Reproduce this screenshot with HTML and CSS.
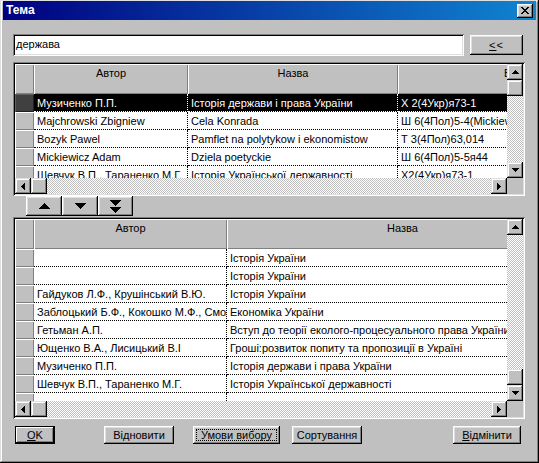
FILE: index.html
```html
<!DOCTYPE html>
<html>
<head>
<meta charset="utf-8">
<title>Тема</title>
<link rel="stylesheet" href="styles.css">
</head>
<body>
<div class="window">
  <div class="titlebar">
    <span class="title">Тема</span>
    <div class="close"><svg width="8" height="7" viewBox="0 0 8 7"><path d="M0 0h2v1H0zM6 0h2v1H6zM1 1h2v1H1zM5 1h2v1H5zM2 2h4v1H2zM3 3h2v1H3zM2 4h4v1H2zM1 5h2v1H1zM5 5h2v1H5zM0 6h2v1H0zM6 6h2v1H6z"/></svg></div>
  </div>
  <div class="content">
    <div class="search">
      <div class="field">держава</div>
      <div class="btn back"><span class="u">&lt;</span>&lt;</div>
    </div>

    <div class="grid grid-top">
      <div class="data">
        <div class="hrow">
          <div class="h ind"></div>
          <div class="h a1">Автор</div>
          <div class="h t1">Назва</div>
          <div class="h k1"><span class="clip">Бібліотечний шифр</span></div>
        </div>
        <div class="row sel">
          <div class="i"></div><div class="c a1">Музиченко П.П.</div><div class="c t1">Історія держави і права України</div><div class="c k1">Х 2(4Укр)я73-1</div>
        </div>
        <div class="row">
          <div class="i"></div><div class="c a1">Majchrowski Zbigniew</div><div class="c t1">Cela Konrada</div><div class="c k1">Ш 6(4Пол)5-4(Mickiewicz)</div>
        </div>
        <div class="row">
          <div class="i"></div><div class="c a1">Bozyk Pawel</div><div class="c t1">Pamflet na polytykow i ekonomistow</div><div class="c k1">Т 3(4Пол)63,014</div>
        </div>
        <div class="row">
          <div class="i"></div><div class="c a1">Mickiewicz Adam</div><div class="c t1">Dziela poetyckie</div><div class="c k1">Ш 6(4Пол)5-5я44</div>
        </div>
        <div class="row">
          <div class="i"></div><div class="c a1">Шевчук В.П., Тараненко М.Г.</div><div class="c t1">Історія Української державності</div><div class="c k1">Х2(4Укр)я73-1</div>
        </div>
      </div>
      <div class="vscroll">
        <div class="sb"><svg width="7" height="4" viewBox="0 0 7 4"><path d="M3 0h1v1h1v1h1v1h1v1H0V3h1V2h1V1h1z"/></svg></div>
        <div class="sb"></div>
        <div class="track"></div>
        <div class="sb"><svg width="7" height="4" viewBox="0 0 7 4"><path d="M0 0h7v1H6v1H5v1H4v1H3V3H2V2H1V1H0z"/></svg></div>
      </div>
      <div class="hscroll">
        <div class="sb"><svg width="4" height="7" viewBox="0 0 4 7"><path d="M3 0h1v7H3V6H2V5H1V4H0V3h1V2h1V1h1z"/></svg></div>
        <div class="sb"></div>
        <div class="track"></div>
        <div class="sb"><svg width="4" height="7" viewBox="0 0 4 7"><path d="M0 0h1v1h1v1h1v1h1v1H3v1H2v1H1v1H0z"/></svg></div>
      </div>
      <div class="corner"></div>
    </div>

    <div class="nav">
      <div class="nbtn"><svg width="11" height="6" viewBox="0 0 11 6" shape-rendering="crispEdges"><polygon points="5.5,0 11,6 0,6"/></svg></div>
      <div class="nbtn"><svg width="11" height="6" viewBox="0 0 11 6" shape-rendering="crispEdges"><polygon points="0,0 11,0 5.5,6"/></svg></div>
      <div class="nbtn"><svg width="11" height="13" viewBox="0 0 11 13" shape-rendering="crispEdges"><polygon points="0,0 11,0 11,1 5.5,6 0,1"/><polygon points="0,7 11,7 5.5,13"/></svg></div>
    </div>

    <div class="grid grid-bottom">
      <div class="data">
        <div class="hrow">
          <div class="h ind"></div>
          <div class="h a2">Автор</div>
          <div class="h t2"><span class="t2h">Назва</span></div>
        </div>
        <div class="row"><div class="i"></div><div class="c a2"></div><div class="c t2">Історія України</div></div>
        <div class="row"><div class="i"></div><div class="c a2"></div><div class="c t2">Історія України</div></div>
        <div class="row"><div class="i"></div><div class="c a2">Гайдуков Л.Ф., Крушінський В.Ю.</div><div class="c t2">Історія України</div></div>
        <div class="row"><div class="i"></div><div class="c a2">Заблоцький Б.Ф., Кокошко М.Ф., Смолій В.А.</div><div class="c t2">Економіка України</div></div>
        <div class="row"><div class="i"></div><div class="c a2">Гетьман А.П.</div><div class="c t2">Вступ до теорії еколого-процесуального права України</div></div>
        <div class="row"><div class="i"></div><div class="c a2">Ющенко В.А., Лисицький В.І</div><div class="c t2">Гроші:розвиток попиту та пропозиції в Україні</div></div>
        <div class="row"><div class="i"></div><div class="c a2">Музиченко П.П.</div><div class="c t2">Історія держави і права України</div></div>
        <div class="row"><div class="i"></div><div class="c a2">Шевчук В.П., Тараненко М.Г.</div><div class="c t2">Історія Української державності</div></div>
        <div class="row"><div class="i"></div><div class="c a2"></div><div class="c t2"></div></div>
      </div>
      <div class="vscroll">
        <div class="sb"><svg width="7" height="4" viewBox="0 0 7 4"><path d="M3 0h1v1h1v1h1v1h1v1H0V3h1V2h1V1h1z"/></svg></div>
        <div class="track"></div>
        <div class="sb"></div>
        <div class="sb"><svg width="7" height="4" viewBox="0 0 7 4"><path d="M0 0h7v1H6v1H5v1H4v1H3V3H2V2H1V1H0z"/></svg></div>
      </div>
      <div class="hscroll">
        <div class="sb"><svg width="4" height="7" viewBox="0 0 4 7"><path d="M3 0h1v7H3V6H2V5H1V4H0V3h1V2h1V1h1z"/></svg></div>
        <div class="sb"></div>
        <div class="track"></div>
        <div class="sb"><svg width="4" height="7" viewBox="0 0 4 7"><path d="M0 0h1v1h1v1h1v1h1v1H3v1H2v1H1v1H0z"/></svg></div>
      </div>
      <div class="corner"></div>
    </div>

    <div class="buttons">
      <div class="btn default ok"><span class="u">O</span>K</div>
      <div class="btn restore">Відновити</div>
      <div class="btn focus cond"><span class="focusrect">Умови вибору</span></div>
      <div class="btn sort">Сортування</div>
      <div class="btn cancel"><span class="u">В</span>ідмінити</div>
    </div>
  </div>
</div>
</body>
</html>
```
FILE: styles.css
```css
* { box-sizing: border-box; }
html, body { margin: 0; padding: 0; background: #c0c0c0; }
body {
  font-family: "Liberation Sans", Arial, sans-serif;
  font-size: 11px;
  color: #000;
}
.window {
  width: 539px;
  height: 463px;
  background: #c0c0c0;
  padding: 1px 3px 3px 3px;
  box-shadow: inset -1px -1px #000, inset 1px 1px #dfdfdf, inset -2px -2px #808080, inset 2px 2px #fff;
}
.titlebar {
  height: 19px;
  display: flex;
  align-items: center;
  justify-content: space-between;
  padding: 0 3px 0 3px;
  background: linear-gradient(to right, #000080, #1084d0);
  color: #fff;
}
.title { font-weight: bold; font-size: 12px; line-height: 13px; }
.close {
  width: 16px; height: 14px;
  background: #c0c0c0;
  display: flex; align-items: center; justify-content: center;
  box-shadow: inset -1px -1px #000, inset 1px 1px #fff, inset -2px -2px #808080, inset 2px 2px #dfdfdf;
  padding-right: 1px;
}
.content { padding-left: 10px; }

.search { display: flex; margin-top: 14px; height: 22px; }
.field {
  width: 451px; height: 22px;
  background: #fff;
  padding: 4px 0 0 3px;
  line-height: 13px;
  box-shadow: inset 1px 1px #808080, inset -1px -1px #fff, inset 2px 2px #000, inset -2px -2px #dfdfdf;
}
.btn {
  height: 18px;
  background: #c0c0c0;
  display: flex; align-items: center; justify-content: center;
  line-height: 13px;
  box-shadow: inset -1px -1px #000, inset 1px 1px #fff, inset -2px -2px #808080, inset 2px 2px #dfdfdf;
}
.back { width: 53px; height: 20px; margin-left: 6px; margin-top: 1px; letter-spacing: 1px; }
.u { text-decoration: underline; }

.grid {
  width: 512px;
  padding: 2px;
  display: grid;
  grid-template-columns: 492px 16px;
  box-shadow: inset 1px 1px #808080, inset -1px -1px #fff, inset 2px 2px #000, inset -2px -2px #dfdfdf;
  background: #c0c0c0;
}
.grid-top { margin-top: 6px; grid-template-rows: 114px 16px; }
.grid-bottom { margin-top: 1px; grid-template-rows: 182px 16px; }
.data { overflow: hidden; background: #fff; }
.hrow { display: flex; height: 30px; background: #c0c0c0; }
.h {
  flex: none;
  height: 30px;
  text-align: center;
  padding-top: 3px;
  line-height: 13px;
  white-space: nowrap;
  overflow: hidden;
  box-shadow: inset 1px 1px #fff, inset -1px -1px #808080;
}
.ind, .i { width: 19px; }
.a1 { width: 154px; }
.t1 { width: 210px; }
.k1 { width: 200px; }
.h.k1 { text-align: left; padding-left: 106px; }
.a2 { width: 193px; }
.t2 { width: 360px; }
.h.t2 { text-align: left; padding-left: 160px; }

.row { display: flex; height: 18px; }
.i {
  flex: none;
  height: 18px;
  background: #c0c0c0;
  box-shadow: inset 1px 1px #fff, inset -1px -1px #808080;
}
.c {
  flex: none;
  height: 18px;
  padding: 3px 0 0 3px;
  line-height: 13px;
  white-space: nowrap;
  overflow: hidden;
  border-bottom: 1px dotted #000;
  border-right: 1px dotted #000;
}
.sel .c { background: #000; color: #fff; border-color: #fff; }
.sel .i { background: #404040; box-shadow: inset 1px 1px #606060, inset -1px -1px #202020; }

.vscroll { display: flex; flex-direction: column; }
.hscroll { display: flex; }
.sb {
  flex: none;
  width: 16px; height: 16px;
  background: #c0c0c0;
  display: flex; align-items: center; justify-content: center;
  box-shadow: inset -1px -1px #000, inset 1px 1px #dfdfdf, inset -2px -2px #808080, inset 2px 2px #fff;
}
.track {
  flex: 1;
  background: repeating-conic-gradient(#c0c0c0 0% 25%, #fff 0% 50%) 0 0 / 2px 2px;
}
.corner { background: #c0c0c0; }

.nav { display: flex; height: 20px; padding-left: 13px; }
.nbtn {
  width: 36px; height: 20px;
  background: #c0c0c0;
  display: flex; align-items: center; justify-content: center;
  box-shadow: inset -1px -1px #000, inset 1px 1px #fff, inset -2px -2px #808080, inset 2px 2px #dfdfdf;
}
.nbtn:last-child { width: 35px; }

.buttons { display: flex; margin-top: 7px; width: 512px; }
.ok { width: 40px; margin-left: 2px; }
.default {
  box-shadow: inset 0 0 0 1px #000, inset -2px -2px #000, inset 2px 2px #fff, inset -3px -3px #808080;
}
.restore { width: 70px; margin-left: 49px; }
.cond { width: 87px; margin-left: 19px; padding: 3px; }
.focusrect {
  flex: 1; align-self: stretch;
  border: 1px dotted #000;
  display: flex; align-items: center; justify-content: center;
}
.sort { width: 70px; margin-left: 12px; }
.cancel { width: 68px; margin-left: auto; margin-right: 4px; }
```
